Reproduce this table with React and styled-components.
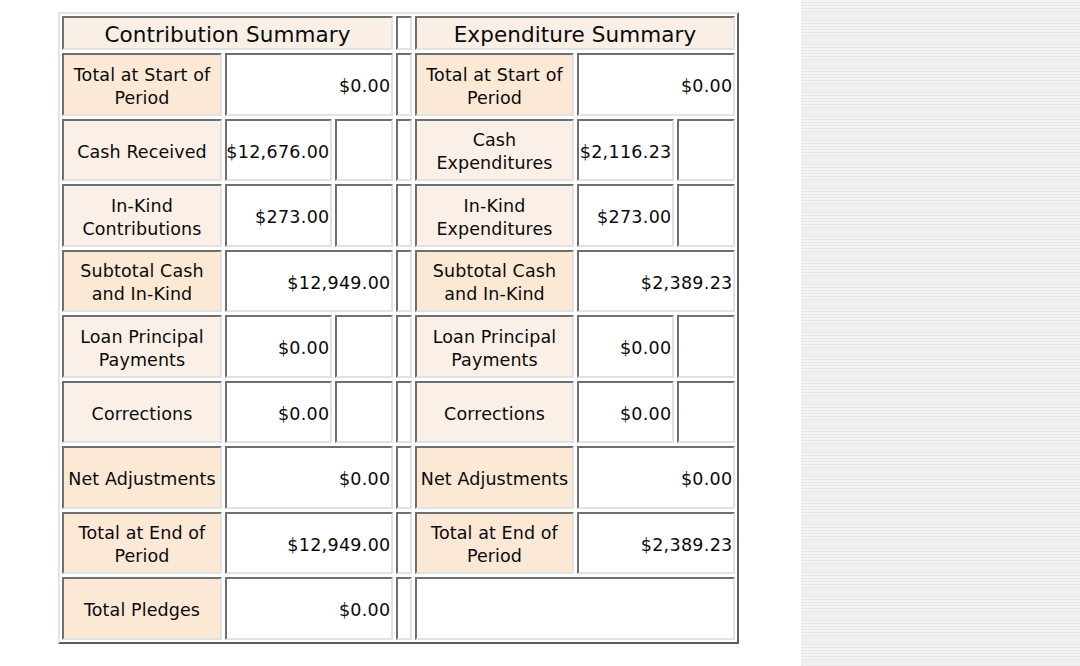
import styled, { createGlobalStyle } from "styled-components";

const GlobalStyle = createGlobalStyle`
  html, body {
    margin: 0;
    padding: 0;
    background: #fff;
  }
  body {
    font-family: "DejaVu Sans", Verdana, sans-serif;
    color: #0a0a0a;
  }
`;

const Page = styled.div`
  display: flex;
  min-height: 666px;
`;

const Main = styled.main`
  width: 801px;
  flex: none;
  padding: 12px 0 0 58px;
  box-sizing: border-box;
`;

const SideStrip = styled.aside`
  flex: 1;
  background: repeating-linear-gradient(
    to bottom,
    #f3f3f3 0px,
    #f3f3f3 2px,
    #e6e6e6 2px,
    #e6e6e6 3px
  );
`;

const Summary = styled.section`
  display: inline-grid;
  grid-template-columns: 160px 107px 58px 16px 159px 97px 58px;
  grid-template-rows: 34px repeat(9, 62.5px);
  gap: 3px;
  padding: 2px;
  border: 2px solid;
  border-color: #e4e4e4 #5e5e5e #5e5e5e #e4e4e4;
`;

const tones = {
  head: "#faefe5",
  total: "#fbe9d6",
  part: "#fbf0e7",
  blank: "#ffffff",
};

const Cell = styled.div`
  grid-column: span ${(p) => p.$span || 1};
  box-sizing: border-box;
  border: 2px solid;
  border-color: #6f6f6f #e2e2e2 #e2e2e2 #6f6f6f;
  background: ${(p) => tones[p.$tone || "blank"]};
  display: flex;
  align-items: center;
  justify-content: ${(p) => (p.$right ? "flex-end" : "center")};
  text-align: ${(p) => (p.$right ? "right" : "center")};
  padding: 5px ${(p) => (p.$right ? "0.5px" : "1px")} 0 1px;
  font-size: 17.5px;
  line-height: 23px;
  white-space: nowrap;
  letter-spacing: ${(p) => (p.$right ? "0.3px" : "0.1px")};
`;

const HeadCell = styled(Cell)`
  font-size: 21.5px;
  padding-top: 3px;
`;

const Lines = ({ text }) =>
  text.split("|").map((line, i, all) => (
    <span key={i}>
      {line}
      {i < all.length - 1 && <br />}
    </span>
  ));

const rows = [
  {
    left: ["Total at Start of|Period", "total", [["$0.00", 2]]],
    right: ["Total at Start of|Period", "total", [["$0.00", 2]]],
  },
  {
    left: ["Cash Received", "part", [["$12,676.00"], [""]]],
    right: ["Cash|Expenditures", "part", [["$2,116.23"], [""]]],
  },
  {
    left: ["In-Kind|Contributions", "part", [["$273.00"], [""]]],
    right: ["In-Kind|Expenditures", "part", [["$273.00"], [""]]],
  },
  {
    left: ["Subtotal Cash|and In-Kind", "total", [["$12,949.00", 2]]],
    right: ["Subtotal Cash|and In-Kind", "total", [["$2,389.23", 2]]],
  },
  {
    left: ["Loan Principal|Payments", "part", [["$0.00"], [""]]],
    right: ["Loan Principal|Payments", "part", [["$0.00"], [""]]],
  },
  {
    left: ["Corrections", "part", [["$0.00"], [""]]],
    right: ["Corrections", "part", [["$0.00"], [""]]],
  },
  {
    left: ["Net Adjustments", "total", [["$0.00", 2]]],
    right: ["Net Adjustments", "total", [["$0.00", 2]]],
  },
  {
    left: ["Total at End of|Period", "total", [["$12,949.00", 2]]],
    right: ["Total at End of|Period", "total", [["$2,389.23", 2]]],
  },
  {
    left: ["Total Pledges", "total", [["$0.00", 2]]],
    right: null,
  },
];

const Side = ({ data, prefix }) => {
  if (!data) return <Cell $span={3} />;
  const [label, tone, values] = data;
  return (
    <>
      <Cell $tone={tone}>
        <div>
          <Lines text={label} />
        </div>
      </Cell>
      {values.map(([v, span], i) => (
        <Cell key={prefix + i} $span={span} $right>
          {v}
        </Cell>
      ))}
    </>
  );
};

const Row = ({ row, index }) => (
  <>
    <Side data={row.left} prefix={"l" + index} />
    <Cell />
    <Side data={row.right} prefix={"r" + index} />
  </>
);

const App = () => {
  return (
    <>
      <GlobalStyle />
      <Page>
        <Main>
          <Summary>
            <HeadCell $tone="head" $span={3}>
              Contribution Summary
            </HeadCell>
            <Cell />
            <HeadCell $tone="head" $span={3}>
              Expenditure Summary
            </HeadCell>
            {rows.map((row, i) => (
              <Row key={i} row={row} index={i} />
            ))}
          </Summary>
        </Main>
        <SideStrip />
      </Page>
    </>
  );
};

export default App;
